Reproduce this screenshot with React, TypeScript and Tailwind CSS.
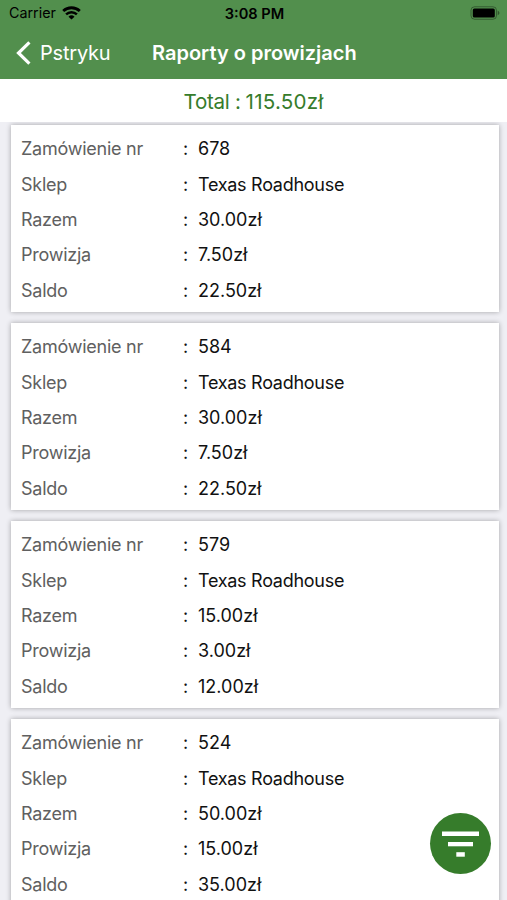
interface Order {
  id: number;
  shop: string;
  total: string;
  commission: string;
  balance: string;
}

const orders: Order[] = [
  { id: 678, shop: 'Texas Roadhouse', total: '30.00zł', commission: '7.50zł', balance: '22.50zł' },
  { id: 584, shop: 'Texas Roadhouse', total: '30.00zł', commission: '7.50zł', balance: '22.50zł' },
  { id: 579, shop: 'Texas Roadhouse', total: '15.00zł', commission: '3.00zł', balance: '12.00zł' },
  { id: 524, shop: 'Texas Roadhouse', total: '50.00zł', commission: '15.00zł', balance: '35.00zł' },
];

function StatusBar() {
  return (
    <div className="grid h-[27px] grid-cols-3 items-center pl-[9px] pr-[7px] text-black">
      <div className="flex items-center gap-[6px]">
        <span className="text-[14.3px] leading-none">Carrier</span>
        <svg className="h-[14px] w-[19px]" viewBox="0 0 19 14" fill="none">
          <path d="M1.2 5.1a12 12 0 0 1 16.6 0" stroke="currentColor" strokeWidth="2.8" />
          <path d="M4.1 8.4a7.8 7.8 0 0 1 10.8 0" stroke="currentColor" strokeWidth="2.5" />
          <path d="M9.5 13.6 6.5 10.7a4.4 4.4 0 0 1 6 0Z" fill="currentColor" />
        </svg>
      </div>
      <span className="pt-px text-center text-[14.6px] font-semibold leading-none">3:08 PM</span>
      <svg className="-mt-px h-[14px] w-[30px] justify-self-end" viewBox="0 0 30 14">
        <rect x="1" y="0.75" width="25.5" height="12.5" rx="3.6" fill="none" stroke="#000" strokeOpacity="0.35" />
        <rect x="2.8" y="2.5" width="22" height="9" rx="1.6" fill="#000" />
        <path d="M27.7 4.8v4.4c1.1-.4 1.7-1.2 1.7-2.2s-.6-1.8-1.7-2.2Z" fill="#000" fillOpacity="0.4" />
      </svg>
    </div>
  );
}

function NavBar() {
  return (
    <div className="grid h-[52px] grid-cols-[152px_1fr] items-center text-white">
      <button className="flex items-center gap-[9px] pl-4 text-left">
        <svg className="-mt-px h-6 w-[15px]" viewBox="0 0 15 24" fill="none">
          <path d="M13.4 1.4 2.5 12l10.9 10.6" stroke="currentColor" strokeWidth="3.2" />
        </svg>
        <span className="text-[20px] leading-none tracking-[-0.2px]">Pstryku</span>
      </button>
      <h1 className="text-[20px] font-semibold leading-none">Raporty o prowizjach</h1>
    </div>
  );
}

function Row({ label, value }: { label: string; value: string | number }) {
  return (
    <div className="flex h-[35.4px] items-center text-[18px]">
      <span className="w-[162px] tracking-[-0.25px] text-[#606060]">{label}</span>
      <span className="w-[15px]">:</span>
      <span>{value}</span>
    </div>
  );
}

function OrderCard({ order }: { order: Order }) {
  return (
    <div className="h-[187px] shrink-0 bg-white px-[10px] pt-[5.6px] text-[#111111] shadow-[0_0_5px_rgba(0,0,0,0.32)]">
      <Row label="Zamówienie nr" value={order.id} />
      <div className="tracking-[-0.28px]">
        <Row label="Sklep" value={order.shop} />
      </div>
      <Row label="Razem" value={order.total} />
      <Row label="Prowizja" value={order.commission} />
      <Row label="Saldo" value={order.balance} />
    </div>
  );
}

export default function App() {
  return (
    <div className="relative flex h-[900px] w-[507px] flex-col overflow-hidden bg-[#efeff4] font-['Inter','Liberation_Sans',sans-serif]">
      <header className="h-[79px] shrink-0 bg-[#528f4d]">
        <StatusBar />
        <NavBar />
      </header>
      <div className="flex h-[43px] shrink-0 items-center justify-center gap-[5px] bg-white pt-[3px] text-[20.6px] text-[#367c2b]">
        <span className="tracking-[-0.3px]">Total :</span>
        <span className="tracking-[0.2px]">115.50zł</span>
      </div>
      <main className="flex min-h-0 flex-1 flex-col gap-[11px] overflow-hidden pl-[11px] pr-[8.5px] pt-[3.4px]">
        {orders.map((order) => (
          <OrderCard key={order.id} order={order} />
        ))}
      </main>
      <button
        aria-label="Filtr"
        className="absolute bottom-[26px] right-[16px] flex size-[61px] items-center justify-center rounded-full bg-[#367c2b] text-white"
      >
        <svg className="h-[26px] w-[37px]" viewBox="0 0 37 26" fill="currentColor">
          <rect x="0" y="0.5" width="37" height="4.5" />
          <rect x="6" y="11" width="25" height="4.3" />
          <rect x="14.3" y="21.2" width="8.5" height="4.5" />
        </svg>
      </button>
    </div>
  );
}
